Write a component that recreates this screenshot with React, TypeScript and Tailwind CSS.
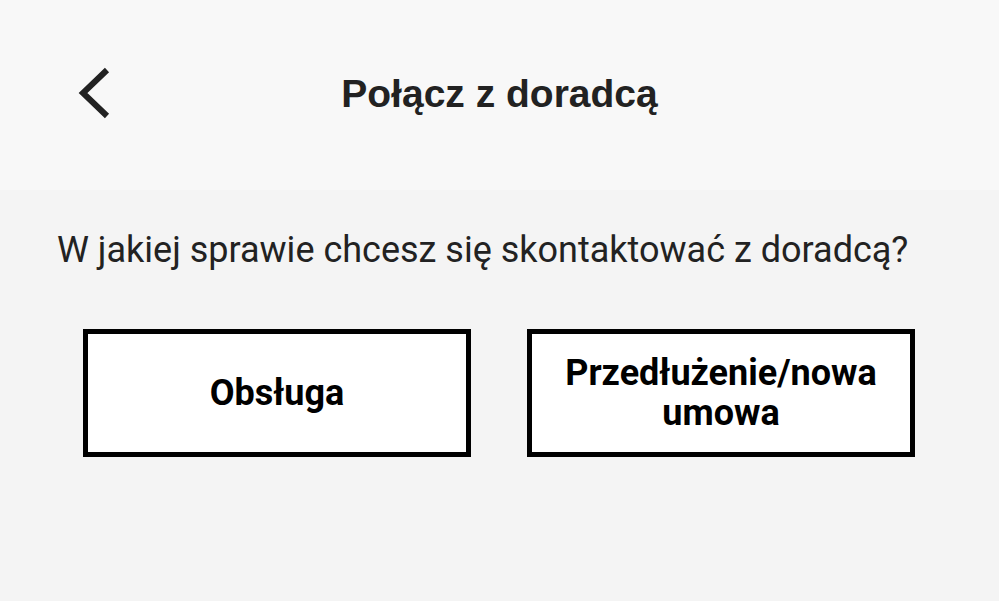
const options = [
  { id: "service", label: "Obsługa" },
  { id: "renewal", label: "Przedłużenie/nowa umowa" },
];

export default function App() {
  return (
    <div className="w-[999px] h-[601px] bg-[#f4f4f4] flex flex-col overflow-hidden">
      {/* nagłówek */}
      <header className="h-[190px] bg-[#f8f8f8] relative flex items-center justify-center">
        <button className="absolute left-[74px] top-[65px] text-[#222]">
          <svg width="38" height="56" viewBox="0 0 38 56" fill="none">
            <polyline
              points="33,5 9,28 33,51"
              stroke="currentColor"
              strokeWidth="6"
              strokeLinejoin="miter"
            />
          </svg>
        </button>
        <h1 className="font-['Liberation_Sans',Arial,sans-serif] font-bold text-[39px] text-[#222] -mt-[2px]">
          Połącz z doradcą
        </h1>
      </header>

      {/* pytanie i przyciski */}
      <main className="px-[57px] pt-[37px] font-['Roboto',sans-serif]">
        <p className="text-[36px] text-[#222] leading-[46px]">
          W jakiej sprawie chcesz się skontaktować z doradcą?
        </p>
        <div className="flex gap-[56px] mt-[56px] ml-[26px]">
          {options.map((opt) => (
            <button
              key={opt.id}
              className="w-[388px] h-[128px] bg-white border-[5px] border-black flex items-center justify-center px-6 text-[36px] leading-[40px] font-bold text-black text-center"
            >
              {opt.label}
            </button>
          ))}
        </div>
      </main>
    </div>
  );
}
